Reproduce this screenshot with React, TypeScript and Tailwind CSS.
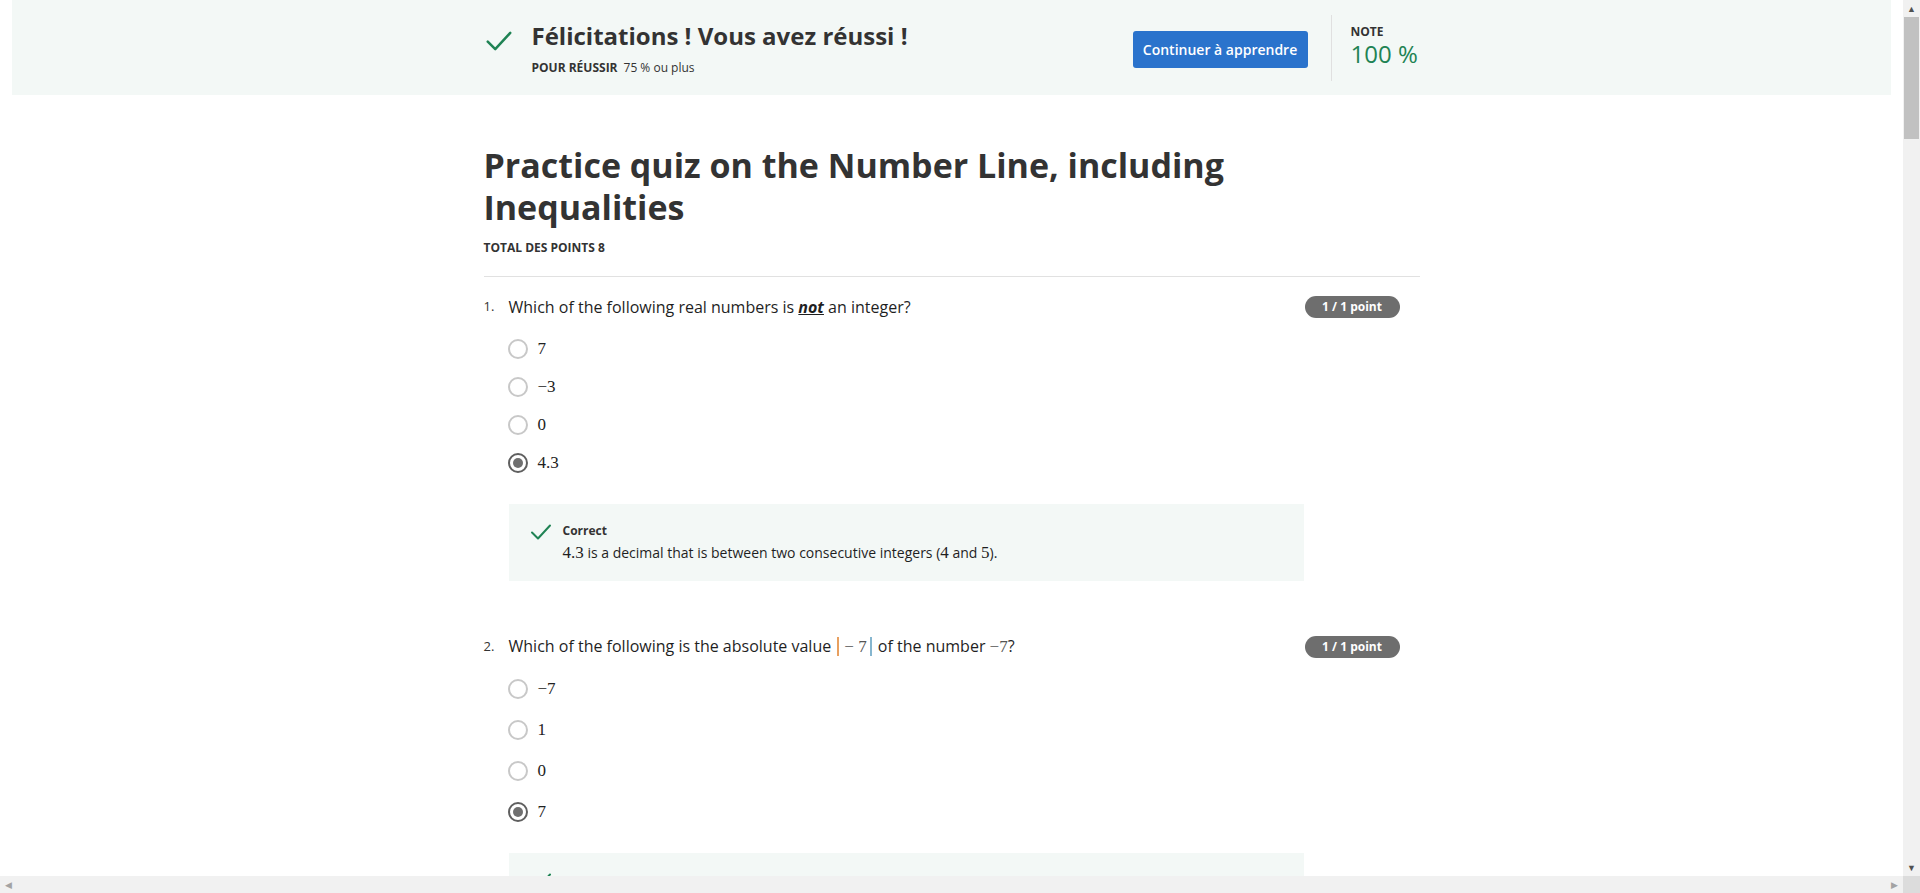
import React from 'react';

const sans = "font-['Open_Sans','Liberation_Sans',sans-serif]";
const math = "font-['Liberation_Serif','DejaVu_Serif',serif]";

function Check({ size = 28 }: { size?: number }) {
  return (
    <svg width={size} height={size} viewBox="0 0 24 24" fill="none">
      <path d="M3 12.5 L9 18.5 L21 5.5" stroke="#1f8354" strokeWidth="2" strokeLinecap="round" strokeLinejoin="round" />
    </svg>
  );
}

function Radio({ checked }: { checked?: boolean }) {
  return checked ? (
    <span className="w-[20px] h-[20px] rounded-full border-2 border-[#5f5f5f] flex items-center justify-center shrink-0">
      <span className="w-[10px] h-[10px] rounded-full bg-[#6f6f6f]" />
    </span>
  ) : (
    <span className="w-[20px] h-[20px] rounded-full border-2 border-[#c8c8c8] shrink-0" />
  );
}

function Badge() {
  return (
    <span className="h-[22px] w-[95px] rounded-full bg-[#6e6e6e] text-white text-[12px] font-bold flex items-center justify-center">
      1 / 1 point
    </span>
  );
}

function Options({ items, selected, wide }: { items: string[]; selected: number; wide?: boolean }) {
  return (
    <div className={`flex flex-col pl-[24px] pt-[20px] ${wide ? 'gap-[19px]' : 'gap-[16px]'}`}>
      {items.map((it, i) => (
        <div key={i} className="flex items-center gap-[10px] h-[22px]">
          <Radio checked={i === selected} />
          <span className={`${math} text-[17px] text-[#222]`}>{it}</span>
        </div>
      ))}
    </div>
  );
}

function Feedback({ children }: { children?: React.ReactNode }) {
  return (
    <div className="ml-[25px] mt-[30px] w-[795px] h-[77px] bg-[#f3f8f6] flex pl-[20px] pt-[16px] gap-[10px]">
      <Check size={24} />
      {children}
    </div>
  );
}

export default function App() {
  return (
    <div className={`${sans} w-[1920px] h-[893px] flex flex-col overflow-hidden bg-white text-[#333]`}>
      <div className="flex flex-1 min-h-0">
        <main className="flex-1 min-w-0 overflow-hidden">
          {/* result banner */}
          <div className="mx-[12px] h-[95px] bg-[#f3f8f6]">
            <div className="w-[936px] mx-auto h-full flex items-center">
              <div className="flex-1 flex items-start gap-[18px] pt-[2px]">
                <div className="pt-[7px]">
                  <Check size={30} />
                </div>
                <div>
                  <div className="text-[24px] font-bold leading-[34px] text-[#333]">Félicitations ! Vous avez réussi !</div>
                  <div className="text-[12px] leading-[20px] mt-[5px]">
                    <span className="font-bold">POUR RÉUSSIR</span>
                    <span className="ml-[6px]">75 % ou plus</span>
                  </div>
                </div>
              </div>
              <button className="w-[175px] h-[37px] mt-[3px] rounded-[3px] bg-[#2a73cc] text-white text-[14px] font-semibold">
                Continuer à apprendre
              </button>
              <div className="ml-[23px] h-[66px] w-px bg-[#e0e0e0]" />
              <div className="pl-[19px] w-[88px] pb-[4px]">
                <div className="text-[12px] font-bold leading-[16px]">NOTE</div>
                <div className="text-[24px] leading-[28px] text-[#1f8354]">100 %</div>
              </div>
            </div>
          </div>

          <div className="w-[936px] mx-auto pt-[49px]">
            <h1 className="text-[34px] font-bold leading-[42px] text-[#333] w-[780px]">
              Practice quiz on the Number Line, including Inequalities
            </h1>
            <div className="text-[12px] font-bold mt-[12px] leading-[16px]">TOTAL DES POINTS 8</div>
            <div className="mt-[20px] h-px bg-[#e1e1e1]" />

            {/* question 1 */}
            <div className="pt-[19px]">
              <div className="flex items-center h-[22px]">
                <span className="w-[25px] text-[13px]">1.</span>
                <span className="flex-1 text-[16px] text-[#1f1f1f]">
                  Which of the following real numbers is <span className="font-bold italic underline">not</span> an integer?
                </span>
                <span className="mr-[20px]"><Badge /></span>
              </div>
              <Options items={['7', '−3', '0', '4.3']} selected={3} />
              <Feedback>
                <div>
                  <div className="text-[12px] font-bold leading-[16px] pt-[3px]">Correct</div>
                  <div className="text-[14px] leading-[22px] text-[#1f1f1f] mt-[3px]">
                    <span className={`${math} text-[17px]`}>4.3</span> is a decimal that is between two consecutive integers (<span className={`${math} text-[17px]`}>4</span> and <span className={`${math} text-[17px]`}>5</span>).
                  </div>
                </div>
              </Feedback>
            </div>

            {/* question 2 */}
            <div className="pt-[55px]">
              <div className="flex items-center h-[22px]">
                <span className="w-[25px] text-[13px]">2.</span>
                <span className="flex-1 text-[16px] text-[#1f1f1f]">
                  Which of the following is the absolute value{' '}
                  <span className={`${math} text-[17px] text-[#555]`}>
                    <span className="border-l-2 border-[#e8a060] ml-[2px] pl-[5px]" />− 7<span className="border-r-2 border-[#86b6cf] pr-[3px] mr-[2px]" />
                  </span>{' '}
                  of the number <span className={`${math} text-[17px] text-[#555]`}>−7</span>?
                </span>
                <span className="mr-[20px]"><Badge /></span>
              </div>
              <Options items={['−7', '1', '0', '7']} selected={3} wide />
              <Feedback />
            </div>
          </div>
        </main>
        {/* vertical scrollbar */}
        <div className="w-[17px] bg-[#f1f1f1] flex flex-col items-center">
          <span className="h-[17px] text-[9px] text-[#505050] leading-[17px]">▲</span>
          <div className="w-[15px] h-[122px] bg-[#c1c1c1]" />
          <div className="flex-1" />
          <span className="h-[17px] text-[9px] text-[#505050] leading-[17px]">▼</span>
        </div>
      </div>
      {/* horizontal scrollbar */}
      <div className="h-[17px] bg-[#f1f1f1] flex items-center">
        <span className="w-[17px] text-center text-[9px] text-[#a3a3a3]">◀</span>
        <div className="flex-1" />
        <span className="w-[17px] text-center text-[9px] text-[#a3a3a3]">▶</span>
        <span className="w-[17px] h-full bg-[#dcdcdc]" />
      </div>
    </div>
  );
}
